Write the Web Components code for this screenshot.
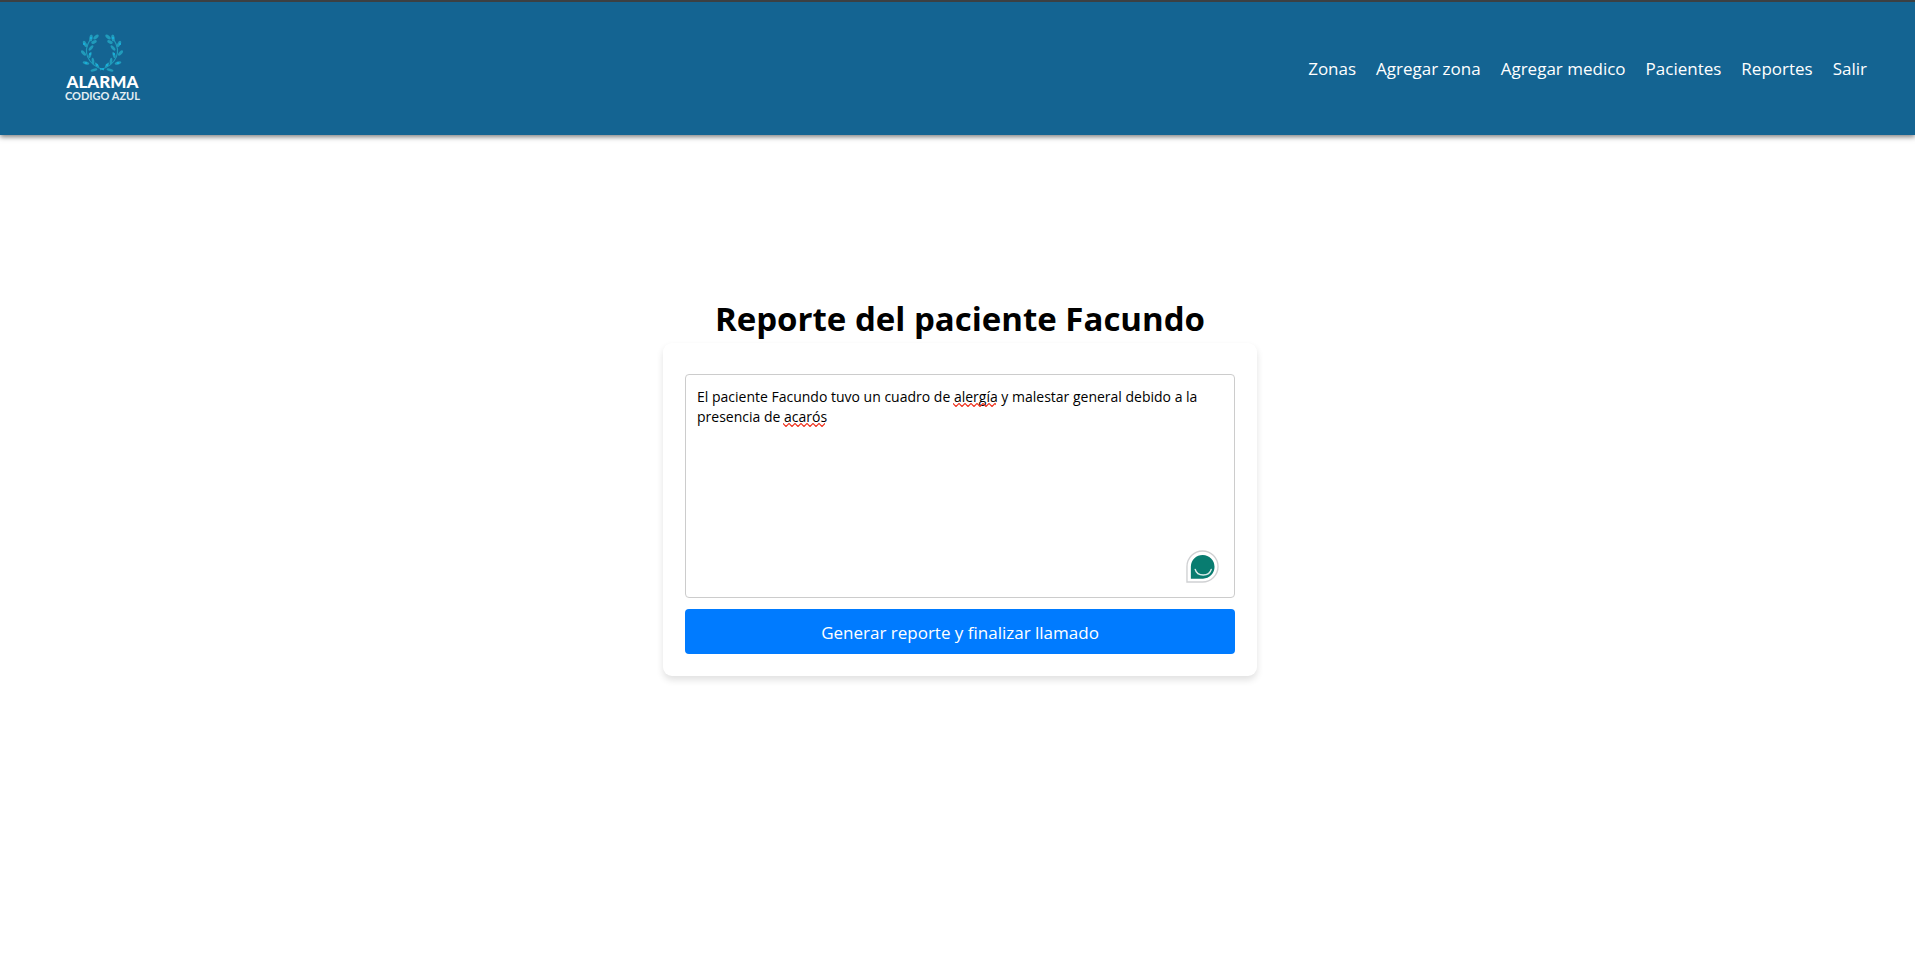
<!DOCTYPE html>
<html lang="es">
<head>
<meta charset="utf-8">
<meta name="viewport" content="width=device-width, initial-scale=1">
<title>Reporte del paciente Facundo</title>
<style>
  html, body { height: 100%; }
  body { margin: 0; background: #fff; color: #000; font-family: "Segoe UI", "Open Sans", "Noto Sans", sans-serif; }
</style>
</head>
<body>
<app-page>
  <app-header slot="header">
    <app-logo slot="brand"></app-logo>
    <nav-item href="#zonas">Zonas</nav-item>
    <nav-item href="#agregar-zona">Agregar zona</nav-item>
    <nav-item href="#agregar-medico">Agregar medico</nav-item>
    <nav-item href="#pacientes">Pacientes</nav-item>
    <nav-item href="#reportes">Reportes</nav-item>
    <nav-item href="#salir">Salir</nav-item>
  </app-header>
  <report-form>
    <span slot="title">Reporte del paciente Facundo</span>
    <span slot="action">Generar reporte y finalizar llamado</span>
  </report-form>
</app-page>

<script>
const define = (name, html, setup) => customElements.define(name, class extends HTMLElement {
  constructor() {
    super();
    this.attachShadow({ mode: "open" }).innerHTML = html;
  }
  connectedCallback() { if (setup) setup(this, this.shadowRoot); }
});

define("app-page", `
  <style>
    :host { display: flex; flex-direction: column; min-height: 100%; }
    main { display: flex; justify-content: center; padding: 160px 16px 40px 21px; }
  </style>
  <slot name="header"></slot>
  <main><slot></slot></main>`);

define("app-header", `
  <style>
    :host { display: block; background: #146492; border-top: 2px solid #3c4043; box-shadow: 0 2px 5px rgba(0,0,0,.5); }
    header { display: flex; align-items: center; justify-content: space-between; padding: 32px 48px 34px 65px; }
    nav { display: flex; flex-wrap: wrap; gap: 20px; padding-top: 3px; }
  </style>
  <header>
    <slot name="brand"></slot>
    <nav aria-label="Principal"><slot></slot></nav>
  </header>`);

define("nav-item", `
  <style>
    :host { display: block; }
    a { color: #fff; text-decoration: none; font-size: 17px; line-height: 24px; white-space: nowrap; }
  </style>
  <a><slot></slot></a>`, (el, root) => { root.querySelector("a").href = el.getAttribute("href"); });

define("app-logo", `
  <style>
    :host { display: flex; flex-direction: column; align-items: center; color: #fff; font-family: Lato, sans-serif; }
    svg { display: block; width: 42px; height: 39px; }
    strong { font-size: 17px; font-weight: 900; line-height: 17px; }
    span { font-size: 11px; font-weight: 700; line-height: 11px; color: #e4eef3; }
  </style>
  <svg viewBox="0 0 42 39" aria-hidden="true" fill="#219bbb">
    <defs>
      <g id="branch">
        <path d="M9 6C2 17 5 30 23 36" fill="none" stroke="#219bbb" stroke-width="1.2"/>
        <ellipse cx="10" cy="4" rx="1.7" ry="3.4" transform="rotate(8 10 4)"/>
        <ellipse cx="15" cy="3" rx="1.6" ry="3.2" transform="rotate(48 15 3)"/>
        <ellipse cx="13" cy="8" rx="1.5" ry="3" transform="rotate(68 13 8)"/>
        <ellipse cx="4" cy="10" rx="1.6" ry="3.4" transform="rotate(-28 4 10)"/>
        <ellipse cx="10" cy="14" rx="1.4" ry="3.2" transform="rotate(42 10 14)"/>
        <ellipse cx="2.5" cy="19" rx="1.6" ry="3.2" transform="rotate(-42 2.5 19)"/>
        <ellipse cx="9" cy="21" rx="1.3" ry="3.2" transform="rotate(18 9 21)"/>
        <ellipse cx="5" cy="29" rx="1.5" ry="3.4" transform="rotate(-72 5 29)"/>
        <ellipse cx="12" cy="27" rx="1.3" ry="3.3" transform="rotate(-8 12 27)"/>
        <ellipse cx="16" cy="31" rx="1.2" ry="3" transform="rotate(-40 16 31)"/>
        <ellipse cx="13" cy="36" rx="1.3" ry="3.5" transform="rotate(75 13 36)"/>
        <g fill="#16b4e4"><circle cx="10" cy="4" r="1"/><circle cx="3" cy="10" r="1"/><circle cx="9" cy="20" r="1"/><circle cx="5" cy="29" r="1"/><circle cx="16" cy="31" r="1"/><circle cx="20" cy="35" r="1"/></g>
      </g>
    </defs>
    <use href="#branch"/>
    <use href="#branch" transform="translate(42 0) scale(-1 1)"/>
  </svg>
  <strong>ALARMA</strong>
  <span>CODIGO AZUL</span>`);

define("assistant-badge", `
  <style>
    :host { display: block; }
    button { display: block; padding: 0; border: 0; background: none; cursor: pointer; }
    svg { display: block; width: 33px; height: 33px; }
  </style>
  <button type="button" aria-label="Asistente de escritura">
    <svg viewBox="0 0 34 34" aria-hidden="true">
      <path d="M1 33V17A16 16 0 1 1 17 33Z" fill="#fff" stroke="#d0d1d3" stroke-width="1.4"/>
      <path d="M5 29.500V17A12.200 12.200 0 1 1 17.500 29.500Z" fill="#087c70"/>
      <path d="M9.500 20C11.500 27.800 24 27.800 26 20" fill="none" stroke="#d9ebe9" stroke-width="1.5" stroke-linecap="round"/>
    </svg>
  </button>`);

define("spelling-mark", `
  <style>
    :host { display: block; height: 4px; pointer-events: none; }
    svg { display: block; width: 100%; height: 4px; }
  </style>
  <svg aria-hidden="true">
    <defs><pattern id="wave" width="6" height="4" patternUnits="userSpaceOnUse">
      <path d="M-3 3.500L0 .5L3 3.500L6 .5L9 3.500" fill="none" stroke="#f0301c" stroke-width="1.2"/>
    </pattern></defs>
    <rect width="100%" height="4" fill="url(#wave)"/>
  </svg>`);

define("report-form", `
  <style>
    :host { display: block; width: 100%; max-width: 594px; }
    h1 { margin: 0; text-align: center; font-size: 33px; font-weight: 700; line-height: 48px; }
    form { display: flex; flex-direction: column; gap: 11px; padding: 31px 22px 22px; border-radius: 9px; background: #fff; box-shadow: 0 4px 7px rgba(0,0,0,.12); }
    .field { position: relative; display: grid; }
    textarea { box-sizing: border-box; width: 100%; height: 224px; margin: 0; padding: 12px 11px 10px; border: 1px solid #ccc; border-radius: 4px; background: #fff; color: #000; font: 14px/20px "Segoe UI", "Open Sans", "Noto Sans", sans-serif; resize: none; outline: none; }
    .send { height: 45px; padding: 2px 11px 0; border: 0; border-radius: 4px; background: #007bff; color: #fff; font: 17px/24px "Segoe UI", "Open Sans", "Noto Sans", sans-serif; cursor: pointer; }
    spelling-mark { position: absolute; }
    .first { left: 268px; top: 29px; width: 43px; }
    .second { left: 98px; top: 49px; width: 42px; }
    assistant-badge { position: absolute; right: 16px; bottom: 15px; }
  </style>
  <h1 id="title"><slot name="title"></slot></h1>
  <form>
    <div class="field">
      <textarea aria-label="Reporte del paciente" spellcheck="false">El paciente Facundo tuvo un cuadro de alergía y malestar general debido a la presencia de acarós</textarea>
      <spelling-mark class="first"></spelling-mark>
      <spelling-mark class="second"></spelling-mark>
      <assistant-badge></assistant-badge>
    </div>
    <button class="send" type="button"><slot name="action"></slot></button>
  </form>`);
</script>
</body>
</html>
